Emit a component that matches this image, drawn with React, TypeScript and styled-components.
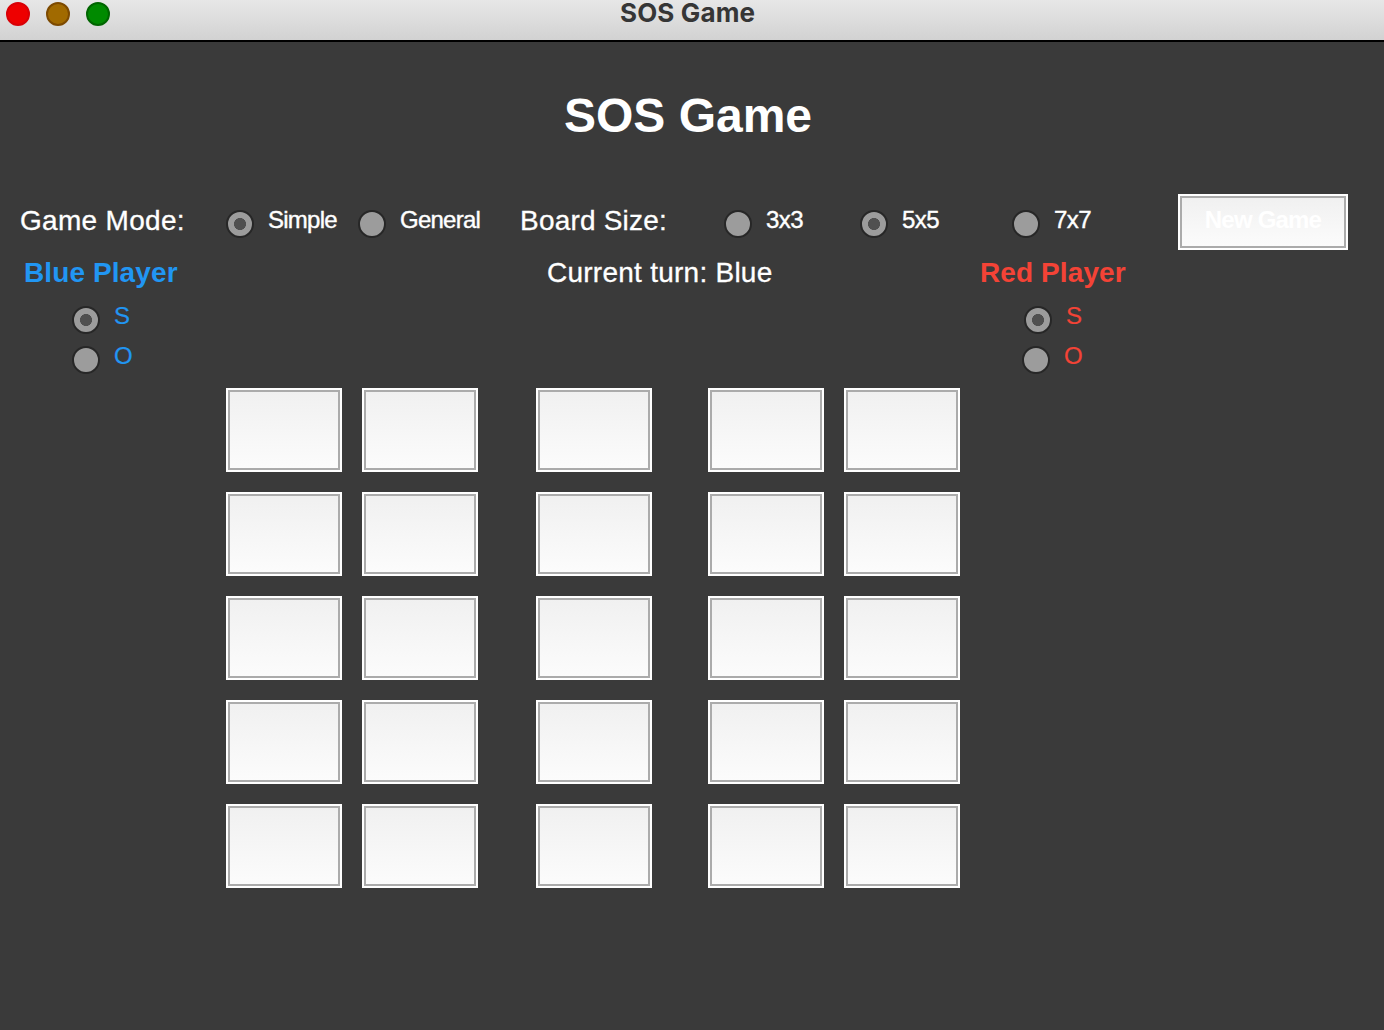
import React, { useState } from "react";
import styled, { createGlobalStyle } from "styled-components";

const GlobalStyle = createGlobalStyle`
  * { box-sizing: border-box; }
  body { margin: 0; background: #3a3a3a; }
`;

const Window = styled.div`
  width: 1384px;
  height: 1030px;
  overflow: hidden;
  background: #3a3a3a;
  color: #ffffff;
  font-family: "Liberation Sans", Arial, sans-serif;
`;

const TitleBar = styled.header`
  display: grid;
  grid-template-columns: 620px 1fr;
  height: 42px;
  background: linear-gradient(#e7e7e7, #d2d2d2);
  border-bottom: 2px solid #000000;
`;

const Lights = styled.div`
  display: flex;
  gap: 16px;
  padding: 2px 0 0 6px;
`;

const Light = styled.span<{ $fill: string; $edge: string }>`
  width: 24px;
  height: 24px;
  border-radius: 50%;
  background: ${(p) => p.$fill};
  border: 2px solid ${(p) => p.$edge};
`;

const WindowTitle = styled.div`
  font: 700 26px/26px Inter, sans-serif;
  letter-spacing: 0.15px;
  color: #363636;
  white-space: nowrap;
`;

const Heading = styled.h1`
  margin: 0;
  padding: 46px 8px 0 0;
  height: 152px;
  font-size: 48px;
  line-height: 56px;
  font-weight: 700;
  text-align: center;
`;

const Options = styled.section`
  display: grid;
  grid-template-columns: 206px 132px 162px 204px 136px 152px 166px 170px;
  padding-left: 20px;
  height: 56px;
`;

const Caption = styled.span<{ $spacing?: number }>`
  padding-top: 11px;
  font-size: 28px;
  line-height: 32px;
  letter-spacing: ${(p) => p.$spacing ?? 0}px;
  -webkit-text-stroke: 0.3px currentColor;
  white-space: nowrap;
`;

const Choice = styled.label<{ $color?: string; $top?: number; $spacing?: number; $stroke?: number }>`
  display: flex;
  align-items: flex-start;
  gap: 14px;
  height: 40px;
  padding-top: ${(p) => p.$top ?? 0}px;
  color: ${(p) => p.$color ?? "#ffffff"};
  font-size: 24px;
  line-height: 28px;
  letter-spacing: ${(p) => p.$spacing ?? 0}px;
  -webkit-text-stroke: ${(p) => p.$stroke ?? 0.2}px currentColor;
  white-space: nowrap;
`;

const ChoiceText = styled.span`
  margin-top: -4px;
`;

const Radio = styled.input`
  appearance: none;
  flex: none;
  margin: 0;
  width: 28px;
  height: 28px;
  border-radius: 50%;
  border: 2px solid #272727;
  background: #9c9c9c;
  &:checked {
    background: radial-gradient(circle, #505050 5.7px, #9c9c9c 6.3px);
  }
`;

const Key = styled.button`
  appearance: none;
  margin: 0;
  padding: 0;
  border: 2px solid #ffffff;
  border-radius: 0;
  background: linear-gradient(#f0f0f0, #fcfcfc);
  box-shadow: inset 0 0 0 2px #ababab;
  font-family: inherit;
`;

const NewGame = styled(Key)`
  height: 56px;
  padding-bottom: 4px;
  color: #ffffff;
  font-size: 24px;
  font-weight: 700;
  line-height: 28px;
  letter-spacing: -0.8px;
`;

const Cell = styled(Key)`
  height: 84px;
  color: #3a3a3a;
  font-size: 28px;
`;

const Play = styled.main`
  display: grid;
  grid-template-columns: 226px 754px 1fr;
`;

const Player = styled.section<{ $color: string; $inset: number }>`
  padding-left: ${(p) => p.$inset}px;
  color: ${(p) => p.$color};
`;

const PlayerName = styled.h2`
  margin: 0;
  padding-top: 7px;
  height: 56px;
  font-size: 28px;
  line-height: 32px;
  font-weight: 700;
  letter-spacing: 0.1px;
  white-space: nowrap;
`;

const Letter = styled.div<{ $inset: number }>`
  padding-left: ${(p) => p.$inset}px;
`;

const Turn = styled.div`
  height: 138px;
  padding: 7px 0 0 321px;
  font-size: 28px;
  line-height: 32px;
  letter-spacing: 0.25px;
  -webkit-text-stroke: 0.3px currentColor;
  white-space: nowrap;
`;

const Board = styled.div`
  display: grid;
  grid-template-columns: 136px 174px 172px 136px 116px;
  row-gap: 20px;
  & > button { width: 116px; }
`;

type Mark = "S" | "O";

function Option({ name, text, checked, onPick, spacing }: {
  name: string; text: string; checked: boolean; onPick: () => void; spacing: number;
}) {
  return (
    <Choice $top={16} $spacing={spacing} $stroke={0.4}>
      <Radio type="radio" name={name} checked={checked} onChange={onPick} />
      <ChoiceText>{text}</ChoiceText>
    </Choice>
  );
}

function PlayerPanel({ name, color, inset, offsets, mark, onPick }: {
  name: string; color: string; inset: number; offsets: [number, number];
  mark: Mark; onPick: (m: Mark) => void;
}) {
  return (
    <Player $color={color} $inset={inset}>
      <PlayerName>{name}</PlayerName>
      {(["S", "O"] as Mark[]).map((m, i) => (
        <Letter key={m} $inset={offsets[i]}>
          <Choice $color={color}>
            <Radio type="radio" name={name} checked={mark === m} onChange={() => onPick(m)} />
            <ChoiceText>{m}</ChoiceText>
          </Choice>
        </Letter>
      ))}
    </Player>
  );
}

export default function App() {
  const [mode, setMode] = useState("Simple");
  const [size, setSize] = useState("5x5");
  const [blue, setBlue] = useState<Mark>("S");
  const [red, setRed] = useState<Mark>("S");
  const [cells, setCells] = useState<string[]>(Array(25).fill(""));
  const [turn, setTurn] = useState("Blue");

  const place = (i: number) => {
    if (cells[i]) return;
    setCells(cells.map((c, k) => (k === i ? (turn === "Blue" ? blue : red) : c)));
    setTurn(turn === "Blue" ? "Red" : "Blue");
  };
  const reset = () => {
    setCells(Array(25).fill(""));
    setTurn("Blue");
  };

  return (
    <>
      <GlobalStyle />
      <Window>
        <TitleBar>
          <Lights>
            <Light $fill="#ee0000" $edge="#d90006" />
            <Light $fill="#a16a00" $edge="#7d4a00" />
            <Light $fill="#008a00" $edge="#006500" />
          </Lights>
          <WindowTitle>SOS Game</WindowTitle>
        </TitleBar>
        <Heading>SOS Game</Heading>
        <Options>
          <Caption $spacing={0.3}>Game Mode:</Caption>
          {["Simple", "General"].map((m) => (
            <Option key={m} name="mode" text={m} spacing={-0.75} checked={mode === m} onPick={() => setMode(m)} />
          ))}
          <Caption $spacing={0.2}>Board Size:</Caption>
          {["3x3", "5x5", "7x7"].map((s) => (
            <Option key={s} name="size" text={s} spacing={-0.6} checked={size === s} onPick={() => setSize(s)} />
          ))}
          <NewGame onClick={reset}>New Game</NewGame>
        </Options>
        <Play>
          <PlayerPanel name="Blue Player" color="#2196f3" inset={24} offsets={[48, 48]} mark={blue} onPick={setBlue} />
          <section>
            <Turn>Current turn: {turn}</Turn>
            <Board>
              {cells.map((c, i) => (
                <Cell key={i} onClick={() => place(i)}>{c}</Cell>
              ))}
            </Board>
          </section>
          <PlayerPanel name="Red Player" color="#f44336" inset={0} offsets={[44, 42]} mark={red} onPick={setRed} />
        </Play>
      </Window>
    </>
  );
}
